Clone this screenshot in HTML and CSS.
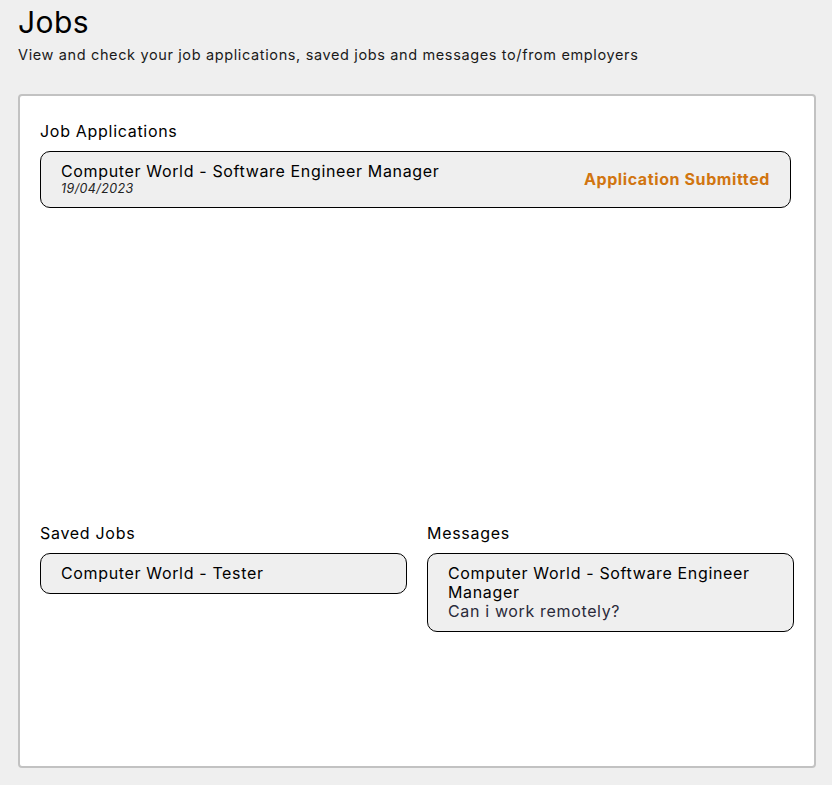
FILE: index.html
```html
<!DOCTYPE html>
<html lang="en">
<head>
<meta charset="utf-8">
<title>Jobs</title>
<link rel="stylesheet" href="styles.css">
</head>
<body>
<main class="page">
  <header class="page-header">
    <h1 class="page-title">Jobs</h1>
    <p class="page-subtitle">View and check your job applications, saved jobs and messages to/from employers</p>
  </header>
  <section class="card">
    <div class="applications">
      <h2 class="section-label">Job Applications</h2>
      <div class="item item-application">
        <div class="item-main">
          <div class="item-title">Computer World - Software Engineer Manager</div>
          <div class="item-date">19/04/2023</div>
        </div>
        <div class="item-status">Application Submitted</div>
      </div>
    </div>
    <div class="columns">
      <div class="column">
        <h2 class="section-label">Saved Jobs</h2>
        <div class="item">
          <div class="item-title">Computer World - Tester</div>
        </div>
      </div>
      <div class="column">
        <h2 class="section-label">Messages</h2>
        <div class="item">
          <div class="item-title">Computer World - Software Engineer Manager</div>
          <div class="item-message">Can i work remotely?</div>
        </div>
      </div>
    </div>
  </section>
</main>
</body>
</html>
```

FILE: styles.css
```css
* { box-sizing: border-box; }

html, body {
  margin: 0;
  padding: 0;
  background: #efefef;
}

body {
  font-family: Inter, "Noto Sans", sans-serif;
  color: #111;
}

.page {
  padding: 0 16px 17px 18px;
}

.page-header {
  padding-top: 4px;
}

.page-title {
  margin: 0;
  font-size: 30px;
  line-height: 36px;
  font-weight: 400;
  letter-spacing: 0.4px;
  color: #000;
}

.page-subtitle {
  margin: 6px 0 0;
  font-size: 14.5px;
  line-height: 18px;
  letter-spacing: 0.63px;
  color: #1a1a1a;
}

.card {
  margin-top: 30px;
  height: 674px;
  background: #fff;
  border: 2px solid #c2c2c2;
  border-radius: 4px;
  padding: 25px 20px 20px;
  display: flex;
  flex-direction: column;
}

.applications {
  height: 402px;
}

.section-label {
  margin: 0 0 10px;
  font-size: 16px;
  line-height: 20px;
  font-weight: 400;
  letter-spacing: 0.7px;
  color: #000;
}

.item {
  background: #efefef;
  border: 1px solid #000;
  border-radius: 10px;
  padding: 10px 20px;
  font-size: 16px;
  line-height: 19px;
  letter-spacing: 0.65px;
}

.item-application {
  margin-right: 3px;
  display: flex;
  align-items: center;
  justify-content: space-between;
}

.item-title {
  color: #000;
}

.item-date {
  font-size: 12.5px;
  line-height: 16px;
  font-style: italic;
  letter-spacing: 0.4px;
  color: #222;
}

.item-status {
  font-weight: 700;
  color: #d17510;
  letter-spacing: 0.6px;
}

.item-message {
  color: #2a2a3a;
}

.columns {
  display: grid;
  grid-template-columns: 1fr 1fr;
  gap: 20px;
}
```
